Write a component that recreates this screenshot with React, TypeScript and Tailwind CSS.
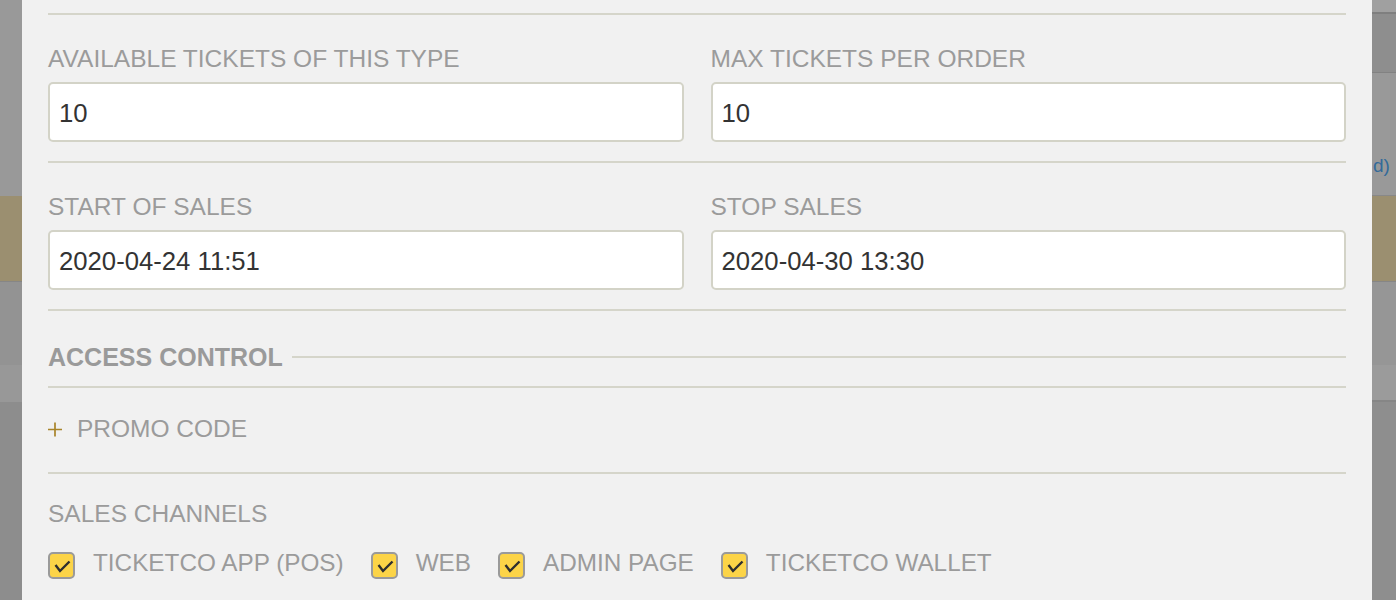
import React from 'react';

const CHANNELS = ['TICKETCO APP (POS)', 'WEB', 'ADMIN PAGE', 'TICKETCO WALLET'];

function Rule({ className = '' }: { className?: string }) {
  return <div className={`h-[2px] bg-[#d5d5ca] ${className}`} />;
}

function Field({ label, value }: { label: string; value: string }) {
  return (
    <div className="flex flex-col">
      <label className="mt-[30px] h-[28px] text-[24.5px] leading-[28px] text-[#9b9b9b]">{label}</label>
      <input
        type="text"
        readOnly
        value={value}
        className="mt-[9px] h-[60px] w-full rounded-[5px] border-2 border-[#d3d3c7] bg-white px-[9px] pt-[2px] text-[25.7px] text-[#333] outline-none"
      />
    </div>
  );
}

function Checkbox() {
  return (
    <div className="flex h-[27px] w-[27px] shrink-0 items-center justify-center rounded-[5px] border-2 border-[#9a9a9a] bg-[#fcd447]">
      <svg width="27" height="27" viewBox="0 0 27 27" className="-m-[2px]">
        <path d="M7.5 13 L12 19 L21.5 9.5" fill="none" stroke="#2f2f2f" strokeWidth="2.4" />
      </svg>
    </div>
  );
}

export default function App() {
  return (
    <div className="flex h-[600px] w-[1396px] overflow-hidden bg-[#999] font-['Liberation_Sans',Arial,sans-serif]">
      {/* page behind the dialog, left side */}
      <div className="flex w-[22px] shrink-0 flex-col">
        <div className="h-[196px] bg-[#999]" />
        <div className="h-[85px] bg-[#9b8f70]" />
        <div className="h-px bg-[#868686]" />
        <div className="h-[83px] bg-[#939393]" />
        <div className="h-[37px] bg-[#989898]" />
        <div className="flex-1 bg-[#8d8d8d]" />
      </div>

      {/* dialog */}
      <div className="flex-1 bg-[#f1f1f1] px-[26px] pt-[13px]">
        <Rule />
        <div className="grid grid-cols-2 gap-x-[27px]">
          <Field label="AVAILABLE TICKETS OF THIS TYPE" value="10" />
          <Field label="MAX TICKETS PER ORDER" value="10" />
        </div>
        <Rule className="mt-[19px]" />
        <div className="grid grid-cols-2 gap-x-[27px]">
          <Field label="START OF SALES" value="2020-04-24 11:51" />
          <Field label="STOP SALES" value="2020-04-30 13:30" />
        </div>
        <Rule className="mt-[19px]" />

        <div className="mt-[32px] flex h-[28px] items-center gap-[9px]">
          <h3 className="text-[25px] font-bold leading-[28px] text-[#9a9a9a]">ACCESS CONTROL</h3>
          <div className="h-[2px] flex-1 bg-[#d5d5ca]" />
        </div>
        <Rule className="mt-[15px]" />

        <div className="mt-[27px] flex h-[28px] items-center gap-[15px] text-[24.5px] leading-[28px]">
          <svg width="14" height="15" viewBox="0 0 14 15">
            <path d="M0 7.5 H14 M7 0.5 V14.5" stroke="#a8842a" strokeWidth="1.7" fill="none" />
          </svg>
          <span className="text-[#9b9b9b]">PROMO CODE</span>
        </div>
        <Rule className="mt-[29px]" />

        <div className="mt-[26px] h-[28px] text-[24.5px] leading-[28px] text-[#9b9b9b]">SALES CHANNELS</div>
        <div className="mt-[24px] flex items-start gap-[27px]">
          {CHANNELS.map((c) => (
            <div key={c} className="flex items-start gap-[18px]">
              <Checkbox />
              <span className="text-[24.3px] leading-[22px] text-[#9b9b9b]">{c}</span>
            </div>
          ))}
        </div>
      </div>

      {/* page behind the dialog, right side */}
      <div className="flex w-[24px] shrink-0 flex-col">
        <div className="h-[12px] bg-[#a0a0a0]" />
        <div className="h-[2px] bg-[#7f7f7f]" />
        <div className="h-[58px] bg-[#8e8e8e]" />
        <div className="h-px bg-[#828282]" />
        <div className="h-[122px] bg-[#999] pl-[1px] pt-[82px]">
          <span className="whitespace-nowrap text-[19px] leading-[22px] text-[#336a9a]">d)</span>
        </div>
        <div className="h-px bg-[#888]" />
        <div className="h-[85px] bg-[#9b8f70]" />
        <div className="h-px bg-[#868686]" />
        <div className="h-[83px] bg-[#969696]" />
        <div className="h-[35px] bg-[#9b9b9b]" />
        <div className="h-[2px] bg-[#868686]" />
        <div className="flex-1 bg-[#8e8e8e]" />
      </div>
    </div>
  );
}
